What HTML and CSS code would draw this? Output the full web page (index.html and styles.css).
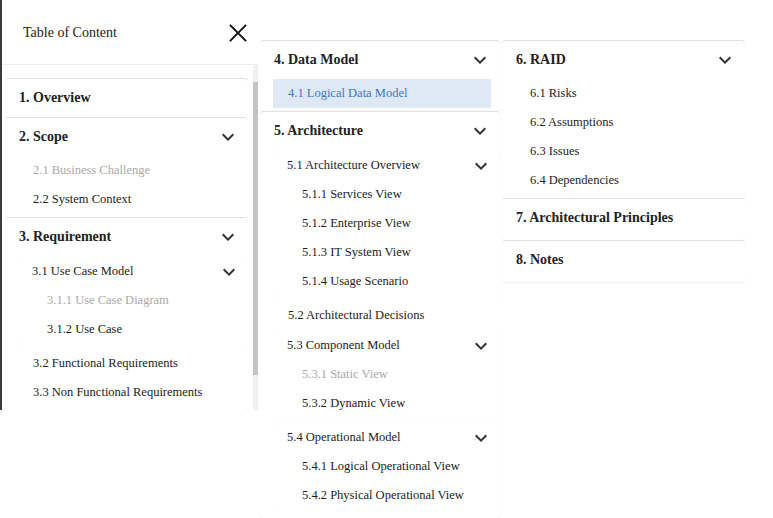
FILE: index.html
```html
<!DOCTYPE html>
<html lang="en">
<head>
<meta charset="utf-8">
<title>Table of Content</title>
<link rel="stylesheet" href="styles.css">
</head>
<body>
<div class="stage">
  <aside class="toc">
    <header class="toc-head">
      <span class="toc-title">Table of Content</span>
      <svg class="close" width="20" height="20" viewBox="0 0 20 20"><path d="M1 1 L19 19 M19 1 L1 19" stroke="#111" stroke-width="2.2" fill="none"/></svg>
    </header>
    <div class="toc-body">
      <div class="toc-list">
        <section class="acc solo">
          <div class="acc-sum"><span class="h">1. Overview</span></div>
        </section>
        <section class="acc">
          <div class="acc-sum"><span class="h">2. Scope</span><svg class="chev" viewBox="0 0 24 24"><path d="M16.59 8.59 12 13.17 7.41 8.59 6 10l6 6 6-6z"/></svg></div>
          <ul class="items">
            <li class="item muted">2.1 Business Challenge</li>
            <li class="item">2.2 System Context</li>
          </ul>
        </section>
        <section class="acc">
          <div class="acc-sum"><span class="h">3. Requirement</span><svg class="chev" viewBox="0 0 24 24"><path d="M16.59 8.59 12 13.17 7.41 8.59 6 10l6 6 6-6z"/></svg></div>
          <div class="sub-acc">
            <div class="sub-sum"><span>3.1 Use Case Model</span><svg class="chev" viewBox="0 0 24 24"><path d="M16.59 8.59 12 13.17 7.41 8.59 6 10l6 6 6-6z"/></svg></div>
            <ul class="items">
              <li class="item muted">3.1.1 Use Case Diagram</li>
              <li class="item">3.1.2 Use Case</li>
            </ul>
          </div>
          <ul class="items">
            <li class="item">3.2 Functional Requirements</li>
            <li class="item">3.3 Non Functional Requirements</li>
          </ul>
        </section>
      </div>
      <div class="scrollbar"><div class="thumb"></div></div>
    </div>
  </aside>

  <div class="col mid">
    <section class="acc">
      <div class="acc-sum"><span class="h">4. Data Model</span><svg class="chev" viewBox="0 0 24 24"><path d="M16.59 8.59 12 13.17 7.41 8.59 6 10l6 6 6-6z"/></svg></div>
      <ul class="items">
        <li class="item active">4.1 Logical Data Model</li>
      </ul>
    </section>
    <section class="acc">
      <div class="acc-sum"><span class="h">5. Architecture</span><svg class="chev" viewBox="0 0 24 24"><path d="M16.59 8.59 12 13.17 7.41 8.59 6 10l6 6 6-6z"/></svg></div>
      <div class="sub-acc">
        <div class="sub-sum"><span>5.1 Architecture Overview</span><svg class="chev" viewBox="0 0 24 24"><path d="M16.59 8.59 12 13.17 7.41 8.59 6 10l6 6 6-6z"/></svg></div>
        <ul class="items">
          <li class="item">5.1.1 Services View</li>
          <li class="item">5.1.2 Enterprise View</li>
          <li class="item">5.1.3 IT System View</li>
          <li class="item">5.1.4 Usage Scenario</li>
        </ul>
      </div>
      <ul class="items">
        <li class="item">5.2 Architectural Decisions</li>
      </ul>
      <div class="sub-acc">
        <div class="sub-sum"><span>5.3 Component Model</span><svg class="chev" viewBox="0 0 24 24"><path d="M16.59 8.59 12 13.17 7.41 8.59 6 10l6 6 6-6z"/></svg></div>
        <ul class="items">
          <li class="item muted">5.3.1 Static View</li>
          <li class="item">5.3.2 Dynamic View</li>
        </ul>
      </div>
      <div class="sub-acc">
        <div class="sub-sum"><span>5.4 Operational Model</span><svg class="chev" viewBox="0 0 24 24"><path d="M16.59 8.59 12 13.17 7.41 8.59 6 10l6 6 6-6z"/></svg></div>
        <ul class="items">
          <li class="item">5.4.1 Logical Operational View</li>
          <li class="item">5.4.2 Physical Operational View</li>
        </ul>
      </div>
    </section>
  </div>

  <div class="col right">
    <section class="acc">
      <div class="acc-sum"><span class="h">6. RAID</span><svg class="chev" viewBox="0 0 24 24"><path d="M16.59 8.59 12 13.17 7.41 8.59 6 10l6 6 6-6z"/></svg></div>
      <ul class="items">
        <li class="item">6.1 Risks</li>
        <li class="item">6.2 Assumptions</li>
        <li class="item">6.3 Issues</li>
        <li class="item">6.4 Dependencies</li>
      </ul>
    </section>
    <section class="acc">
      <div class="acc-sum"><span class="h">7. Architectural Principles</span></div>
    </section>
    <section class="acc">
      <div class="acc-sum"><span class="h">8. Notes</span></div>
    </section>
  </div>
</div>
</body>
</html>
```

FILE: styles.css
```css
* { box-sizing: border-box; }

html, body {
  margin: 0;
  padding: 0;
  background: #ffffff;
}

body {
  font-family: "Liberation Serif", "Times New Roman", serif;
  color: #222222;
}

ul { margin: 0; padding: 0; list-style: none; }

.stage {
  display: flex;
  align-items: flex-start;
}

/* ---------- left drawer ---------- */
.toc {
  width: 258px;
  height: 410px;
  border-left: 2px solid #3a3a3a;
  background: #ffffff;
  display: flex;
  flex-direction: column;
  flex: none;
}

.toc-head {
  height: 65px;
  flex: none;
  display: flex;
  align-items: center;
  justify-content: space-between;
  padding: 2px 11px 0 21px;
  border-bottom: 1px solid #ececec;
}

.toc-title {
  font-size: 14px;
  color: #222222;
}

.close {
  display: block;
  width: 18px;
  height: 18px;
}

.toc-body {
  flex: 1;
  display: flex;
  overflow: hidden;
}

.toc-list {
  width: 247px;
  padding: 13px 0 0 3px;
  overflow: hidden;
}

.scrollbar {
  width: 5px;
  margin-left: 5px;
  background: #f1f1f1;
  padding-top: 17px;
}

.thumb {
  height: 293px;
  background: #c4c4c4;
}

/* ---------- columns ---------- */
.col {
  flex: none;
  margin-top: 40px;
}

.mid {
  width: 244px;
  padding: 0 2px;
}

.right {
  width: 245px;
  padding-right: 2px;
}

/* ---------- accordion ---------- */
.acc {
  border-top: 1px solid #e0e0e0;
  border-radius: 4px;
  box-shadow: 0 1px 1px rgba(0, 0, 0, 0.06);
  padding-bottom: 3px;
  background: #ffffff;
}

.acc.solo { padding-bottom: 0; }

.acc-sum {
  height: 38px;
  display: flex;
  align-items: center;
  justify-content: space-between;
  padding: 0 8px 0 14px;
}

.h {
  font-size: 14px;
  font-weight: bold;
  color: #222222;
}

.chev {
  width: 24px;
  height: 24px;
  fill: #333333;
  display: block;
}

.sub-acc {
  margin: 1px 0 3px 14px;
  border-radius: 4px;
  box-shadow: 0 0 1px rgba(0, 0, 0, 0.07);
  padding-bottom: 2px;
}

.sub-sum {
  height: 29px;
  display: flex;
  align-items: center;
  justify-content: space-between;
  padding: 0 7px 0 13px;
  font-size: 12.5px;
}

.item {
  height: 29px;
  display: flex;
  align-items: center;
  margin: 0 9px 0 13px;
  padding-left: 15px;
  font-size: 12.5px;
  color: #222222;
}

.item.muted { color: #a9a9a9; }

.item.active {
  background: #dfe9f6;
  color: #3b78c8;
}
```
